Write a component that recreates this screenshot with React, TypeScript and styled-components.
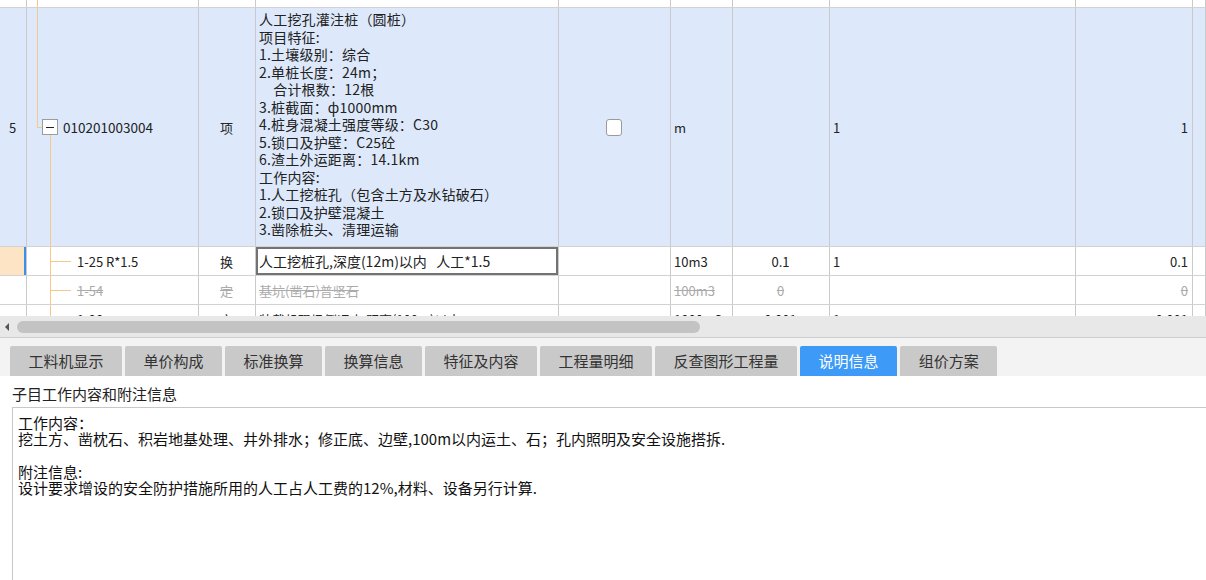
import React from "react";
import styled, { createGlobalStyle } from "styled-components";

const GlobalStyle = createGlobalStyle`
  html, body {
    margin: 0;
    padding: 0;
    background: #fff;
  }
  body {
    font-family: "Noto Sans CJK SC", "Noto Sans", sans-serif;
    color: #222;
    overflow: hidden;
  }
`;

const COLS = "27px 172px 57px 303px 112px 62px 97px 246px 117px 1fr";

const descLines = [
  "人工挖孔灌注桩（圆桩）",
  "项目特征:",
  "1.土壤级别：综合",
  "2.单桩长度：24m；",
  "\u3000合计根数：12根",
  "3.桩截面：ф1000mm",
  "4.桩身混凝土强度等级：C30",
  "5.锁口及护壁：C25砼",
  "6.渣土外运距离：14.1km",
  "工作内容:",
  "1.人工挖桩孔（包含土方及水钻破石）",
  "2.锁口及护壁混凝土",
  "3.凿除桩头、清理运输",
];

const childRows = [
  { code: "1-25 R*1.5", type: "换", desc: "人工挖桩孔,深度(12m)以内   人工*1.5", unit: "10m3", expr: "0.1", qty: "1", total: "0.1", current: true, muted: false },
  { code: "1-54", type: "定", desc: "基坑(凿石)普坚石", unit: "100m3", expr: "0", qty: "", total: "0", current: false, muted: true },
  { code: "1-98", type: "定", desc: "装载机现场倒运土 距离(100m)以内", unit: "1000m3", expr: "0.001", qty: "1", total: "0.001", current: false, muted: false },
];

const tabs = ["工料机显示", "单价构成", "标准换算", "换算信息", "特征及内容", "工程量明细", "反查图形工程量", "说明信息", "组价方案"];

const App = () => {
  return (
    <Sheet>
      <GlobalStyle />
      <Grid>
        <Row $h={8}>
          <Cell />
          <Cell>
            <VLine $x={10} />
          </Cell>
          <Cell />
          <Cell />
          <Cell />
          <Cell />
          <Cell />
          <Cell />
          <Cell />
          <Cell />
        </Row>
        <Row $h={239} $bg="#dde9fb">
          <Cell $align="center">5</Cell>
          <Cell $pad={15}>
            <VLine $x={10} $bottom="50%" />
            <HLine $x={10} $w={5} />
            <Expander>
              <span />
            </Expander>
            <CodeText>010201003004</CodeText>
            <VLine $x={23} $top="calc(50% + 8px)" />
          </Cell>
          <Cell $align="center">项</Cell>
          <Cell $top>
            <Desc>
              {descLines.map((line, i) => (
                <div key={i}>{line}</div>
              ))}
            </Desc>
          </Cell>
          <Cell $align="center">
            <CheckBox />
          </Cell>
          <Cell>m</Cell>
          <Cell />
          <Cell>1</Cell>
          <Cell $align="right">1</Cell>
          <Cell />
        </Row>
        {childRows.map((r) => (
          <Row key={r.code} $h={29} $muted={r.muted}>
            <Cell $current={r.current} />
            <Cell $pad={50}>
              <VLine $x={23} />
              <HLine $x={23} $w={21} />
              {r.code}
            </Cell>
            <Cell $align="center">{r.type}</Cell>
            <Cell $editing={r.current}>{r.desc}</Cell>
            <Cell />
            <Cell>{r.unit}</Cell>
            <Cell $align="center">{r.expr}</Cell>
            <Cell>{r.qty}</Cell>
            <Cell $align="right">{r.total}</Cell>
            <Cell />
          </Row>
        ))}
      </Grid>
      <HScroll>
        <ScrollArrow />
        <ScrollThumb />
      </HScroll>
      <TabBar>
        {tabs.map((t) => (
          <Tab key={t} $active={t === "说明信息"}>
            {t}
          </Tab>
        ))}
      </TabBar>
      <PanelLabel>子目工作内容和附注信息</PanelLabel>
      <NoteBox>
        <div>工作内容：</div>
        <div>挖土方、凿枕石、积岩地基处理、井外排水；修正底、边壁,100m以内运土、石；孔内照明及安全设施搭拆.</div>
        <div>&nbsp;</div>
        <div>附注信息:</div>
        <div>设计要求增设的安全防护措施所用的人工占人工费的12%,材料、设备另行计算.</div>
      </NoteBox>
    </Sheet>
  );
};

export default App;

const Sheet = styled.div`
  width: 1206px;
  height: 580px;
  overflow: hidden;
  display: flex;
  flex-direction: column;
  background: #fff;
`;

const Grid = styled.div`
  height: 316px;
  flex: none;
  overflow: hidden;
  font-size: 13px;
`;

const Row = styled.div<{ $h: number; $bg?: string; $muted?: boolean }>`
  box-sizing: border-box;
  display: grid;
  grid-template-columns: ${COLS};
  height: ${(p) => p.$h}px;
  flex: none;
  border-bottom: 1px solid #d2d2d2;
  background: ${(p) => p.$bg || "#fff"};
  color: ${(p) => (p.$muted ? "#ababab" : "#222")};
  text-decoration: ${(p) => (p.$muted ? "line-through" : "none")};
`;

const Cell = styled.div<{
  $align?: "left" | "center" | "right";
  $top?: boolean;
  $pad?: number;
  $current?: boolean;
  $editing?: boolean;
}>`
  box-sizing: border-box;
  position: relative;
  min-width: 0;
  display: flex;
  align-items: ${(p) => (p.$top ? "flex-start" : "center")};
  justify-content: ${(p) =>
    p.$align === "center" ? "center" : p.$align === "right" ? "flex-end" : "flex-start"};
  padding: 0 4px 0 ${(p) => p.$pad ?? 3}px;
  border-right: 1px solid #cacaca;
  overflow: hidden;
  white-space: pre;
  background: ${(p) => (p.$current ? "#fde4c5" : "transparent")};
  box-shadow: ${(p) =>
    p.$current ? "inset -2px 0 0 #3d8fea" : p.$editing ? "inset 0 0 0 2px #737373" : "none"};
  font-size: ${(p) => (p.$editing ? "14px" : "13px")};
`;

const VLine = styled.span<{ $x: number; $top?: string; $bottom?: string }>`
  position: absolute;
  left: ${(p) => p.$x}px;
  top: ${(p) => p.$top ?? "0"};
  bottom: ${(p) => p.$bottom ?? "0"};
  width: 1px;
  background: #f7c88b;
`;

const HLine = styled.span<{ $x: number; $w: number }>`
  position: absolute;
  left: ${(p) => p.$x}px;
  top: 50%;
  width: ${(p) => p.$w}px;
  height: 1px;
  background: #f7c88b;
`;

const Expander = styled.div`
  box-sizing: border-box;
  width: 16px;
  height: 16px;
  flex: none;
  border: 1px solid #9c9c9c;
  background: #fff;
  display: flex;
  align-items: center;
  justify-content: center;
  span {
    width: 8px;
    height: 1px;
    background: #222;
  }
`;

const CodeText = styled.span`
  margin-left: 5px;
  font-size: 13.5px;
`;

const Desc = styled.div`
  padding-top: 3px;
  font-size: 14px;
  line-height: 17.5px;
  letter-spacing: 0.2px;
`;

const CheckBox = styled.div`
  box-sizing: border-box;
  width: 16px;
  height: 17px;
  border: 1px solid #9a9a9a;
  border-radius: 3px;
  background: #fff;
`;

const HScroll = styled.div`
  box-sizing: border-box;
  height: 22px;
  flex: none;
  display: flex;
  align-items: center;
  padding-left: 5px;
  background: #e8e8e8;
  border-bottom: 1px solid #cdcdcd;
`;

const ScrollArrow = styled.div`
  width: 0;
  height: 0;
  border-top: 4px solid transparent;
  border-bottom: 4px solid transparent;
  border-right: 4px solid #555;
`;

const ScrollThumb = styled.div`
  margin-left: 8px;
  width: 683px;
  height: 12px;
  border-radius: 6px;
  background: #c3c3c3;
`;

const TabBar = styled.div`
  height: 38px;
  flex: none;
  display: flex;
  align-items: flex-end;
  gap: 3px;
  padding-left: 10px;
  background: #f3f3f3;
`;

const Tab = styled.div<{ $active?: boolean }>`
  height: 30px;
  line-height: 30px;
  padding: 0 18.5px;
  border-radius: 2px 2px 0 0;
  font-size: 15px;
  white-space: nowrap;
  background: ${(p) => (p.$active ? "#3d9af6" : "#c9c9c9")};
  color: ${(p) => (p.$active ? "#fff" : "#333")};
`;

const PanelLabel = styled.div`
  box-sizing: border-box;
  height: 31px;
  flex: none;
  display: flex;
  align-items: center;
  padding: 3px 0 0 12px;
  font-size: 15px;
  color: #222;
`;

const NoteBox = styled.div`
  flex: 1;
  margin-left: 12px;
  padding: 7px 5px;
  border-top: 1px solid #c8c8c8;
  border-left: 1px solid #c8c8c8;
  font-size: 15px;
  line-height: 16.3px;
  color: #111;
  white-space: nowrap;
`;
